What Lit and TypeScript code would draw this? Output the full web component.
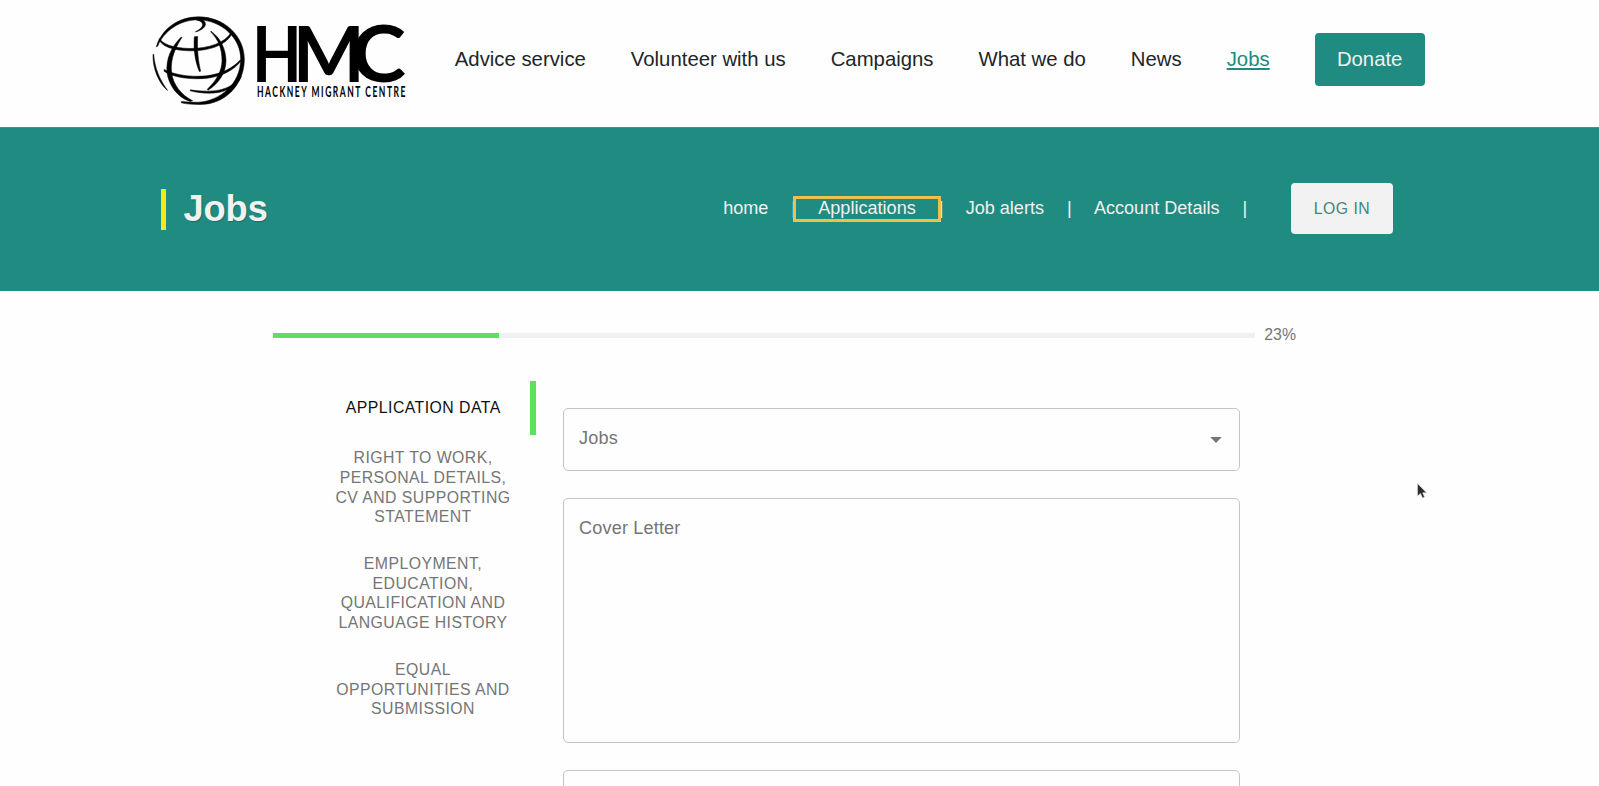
import { LitElement, html, css, svg } from "lit";
import { customElement } from "lit/decorators.js";

const NAV = ["Advice service", "Volunteer with us", "Campaigns", "What we do", "News"];
const STEPS = [
  ["APPLICATION DATA"],
  ["RIGHT TO WORK,", "PERSONAL DETAILS,", "CV AND SUPPORTING", "STATEMENT"],
  ["EMPLOYMENT,", "EDUCATION,", "QUALIFICATION AND", "LANGUAGE HISTORY"],
  ["EQUAL", "OPPORTUNITIES AND", "SUBMISSION"],
];

const globe = svg`
  <g transform="translate(0 0.5) scale(0.33333)">
    <path d="M19 109C34 58 82 19 146 19C222 19 283 76 283 146C283 222 226 282 150 282C130 282 110 281 94 277V273C112 275 132 276 148 275C210 270 271 222 272 146C273 84 216 30 146 28C92 27 42 60 23 107Z"/>
    <path d="M142 24C158 25 168 33 166 43C164 53 150 62 136 64C148 58 157 51 158 43C158 35 150 30 140 29Z"/>
    <path d="M29 84C36 100 70 113 120 114C178 114 224 96 242 68L246 70C228 104 180 121 122 121C70 120 34 108 27 86Z"/>
    <path d="M42 177C80 196 130 200 170 196C216 190 250 172 271 148L273 151C252 180 214 198 172 203C124 208 74 202 43 183Z"/>
    <path d="M96 80C68 124 61 156 65 188C70 222 92 252 128 271L120 273C80 260 56 222 51 186C48 146 62 112 92 81Z"/>
    <path d="M133 79L143 78C141 120 145 154 152 182L148 183C136 156 130 118 133 79Z"/>
    <path d="M183 62C210 82 227 112 228 150C228 186 208 218 174 239L172 236C200 210 216 180 216 150C216 116 206 88 182 64Z"/>
    <path d="M11 131C14 172 28 206 53 240C28 220 8 178 9 132Z"/>
    <path d="M121 238C150 243 184 243 206 239C236 233 258 218 274 198C264 222 236 240 206 246C178 250 146 248 121 241Z"/>
  </g>`;

@customElement("app-root")
export class AppRoot extends LitElement {
  static styles = css`
    :host {
      display: block;
      position: relative;
      height: 786px;
      overflow: hidden;
      background: #fefefe;
      font-family: "Liberation Sans", Arial, sans-serif;
      font-size: 18.08px;
    }
    *, *::after { box-sizing: border-box; }
    .header {
      height: 127px;
      display: flex;
      align-items: flex-start;
      padding-left: 150px;
    }
    .logo { margin-top: 10px; width: 264px; height: 100px; flex: none; overflow: visible; }
    .nav {
      display: flex;
      align-items: center;
      gap: 45px;
      margin: 33.4px 0 0 40.8px;
      height: 52.6px;
      font-size: 20.34px;
      color: #212529;
      white-space: nowrap;
    }
    .active { color: #208b80; text-decoration: underline; }
    .donate {
      background: #208b80;
      color: #f1f1f1;
      border-radius: 4px;
      width: 110px;
      height: 52.6px;
      line-height: 52px;
      text-align: center;
    }
    .banner {
      height: 163.6px;
      background: #208b80;
      border-top: 1px solid #4b8f86;
      display: flex;
      align-items: center;
      padding: 0 206px 1.6px 161px;
      justify-content: space-between;
    }
    .title {
      margin: 1.6px 0 0;
      border-left: 5px solid #f8e71c;
      padding-left: 17.4px;
      height: 40.6px;
      line-height: 40.6px;
      font-size: 36.16px;
      color: #f1f1f1;
      text-shadow: 1px 1px 1px rgba(0, 0, 0, 0.2);
    }
    .menu {
      display: flex;
      align-items: center;
      color: #f1f1f1;
      white-space: nowrap;
      gap: 22.6px;
    }
    .bar { margin: 0 -0.3px 0 0.3px; }
    .current { position: relative; }
    .current::after {
      content: "";
      position: absolute;
      left: -25.4px;
      top: -2px;
      width: 148px;
      height: 26px;
      border: 3px solid #efc050;
    }
    .login {
      margin-left: 21.6px;
      width: 102px;
      height: 51px;
      line-height: 51px;
      text-align: center;
      border-radius: 4px;
      background: #f2f2f2;
      color: #43857c;
      font-size: 15.82px;
      letter-spacing: 0.45px;
    }
    .progress {
      display: flex;
      align-items: center;
      gap: 9px;
      margin: 35.9px 0 0 273.3px;
      height: 18px;
      font-size: 15.82px;
      color: #757575;
    }
    .track { width: 982px; height: 4.6px; background: #f0f0f2; }
    .fill { height: 100%; background: #5de05d; }
    .body { display: flex; margin: 36.5px 0 0 310px; }
    .tabs { width: 226px; }
    .tab {
      display: flex;
      flex-direction: column;
      justify-content: center;
      min-height: 54.24px;
      padding: 13.1px 0 14.5px;
      font-size: 15.82px;
      line-height: 19.6px;
      letter-spacing: 0.45px;
      text-align: center;
      color: #757575;
      white-space: nowrap;
    }
    .selected { color: #111; border-right: 6.5px solid #5de05d; padding: 13.2px 0 13.5px 6.5px; }
    .form { margin: 27px 0 0 27px; width: 677px; }
    .field {
      display: flex;
      justify-content: space-between;
      border: 1px solid #c4c4c4;
      border-radius: 5px;
      height: 63px;
      padding: 18px 17px 0 15px;
      margin-bottom: 27px;
      line-height: 22px;
      letter-spacing: 0.17px;
      color: #757575;
    }
    .area { height: 245px; }
    .arrow { width: 12px; height: 6px; margin-top: 10px; }
    .pointer { position: absolute; left: 1416px; top: 482px; width: 12px; height: 18px; }
    .globe { fill: #000; stroke: #000; stroke-width: 1.6px; stroke-linejoin: round; }
    .mark { font-family: Lato, sans-serif; font-weight: 700; }
  `;

  render() {
    return html`
      <header class="header">
        <svg class="logo" viewBox="0 0 264 100">
          <g class="globe">${globe}</g>
          <g class="mark">
            <text transform="translate(102 71.5) scale(0.84 1)" font-size="77">H</text>
            <text transform="translate(142.8 71.5) scale(0.99 1)" font-size="77">M</text>
            <text transform="translate(201 71.5) scale(1.08 1.02)" font-size="77">C</text>
            <text transform="translate(107 86.6) scale(0.56 1)" font-size="15.2" textLength="265" lengthAdjust="spacing">HACKNEY MIGRANT CENTRE</text>
          </g>
        </svg>
        <nav class="nav">
          ${NAV.map((n) => html`<span>${n}</span>`)}
          <span class="active">Jobs</span>
          <span class="donate">Donate</span>
        </nav>
      </header>
      <section class="banner">
        <h1 class="title">Jobs</h1>
        <div class="menu">
          <span>home</span><span class="bar">|</span>
          <span class="current">Applications</span><span class="bar">|</span>
          <span>Job alerts</span><span class="bar">|</span>
          <span>Account Details</span><span class="bar">|</span>
          <span class="login">LOG IN</span>
        </div>
      </section>
      <div class="progress">
        <div class="track"><div class="fill" style="width:23%"></div></div>
        <span>23%</span>
      </div>
      <main class="body">
        <div class="tabs">
          ${STEPS.map((lines, i) => html`<div class="tab ${i === 0 ? "selected" : ""}">
            ${lines.map((l) => html`<span>${l}</span>`)}
          </div>`)}
        </div>
        <div class="form">
          <div class="field">
            <span>Jobs</span>
            <svg class="arrow" viewBox="0 0 12 6"><path d="M0.3 0H11.7L6 6Z" fill="#757575" /></svg>
          </div>
          <div class="field area"><span>Cover Letter</span></div>
          <div class="field"></div>
        </div>
      </main>
      <svg class="pointer" viewBox="0 0 12 18">
        <path d="M1.5 1.5V14L4.4 11.4L6.6 16L8.6 15L6.6 10.8H10.5Z" fill="#2b2b2b" stroke="#ddd" stroke-width="0.6" />
      </svg>
    `;
  }
}
